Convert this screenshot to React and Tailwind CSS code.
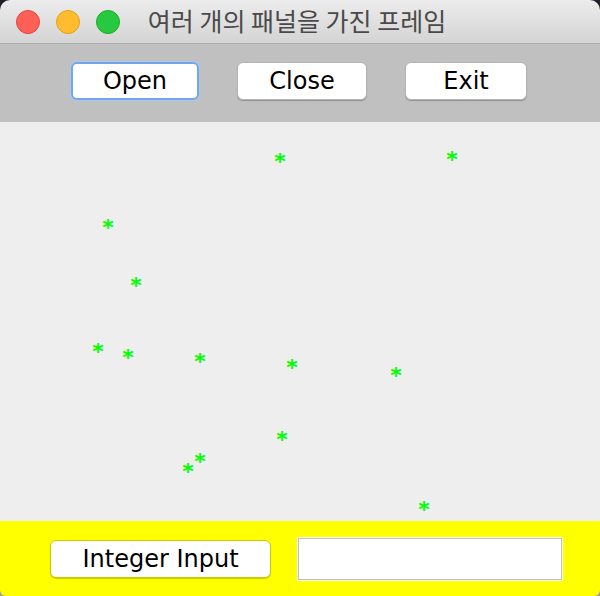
const stars = [
  [280, 158], [452, 156], [108, 224], [136, 282],
  [98, 348], [128, 354], [200, 358], [292, 364], [396, 372],
  [282, 436], [200, 458], [188, 468], [424, 506],
]

function Light({ color, ring }) {
  return <div className={`w-[24px] h-[24px] rounded-full border ${color} ${ring}`} />
}

function MacButton({ children, width, focused }) {
  return (
    <button
      className={`h-[38px] ${width} bg-white rounded-[6px] text-[24px] leading-none text-black flex items-center justify-center ${
        focused
          ? 'border-2 border-[#74a7ea] shadow-[0_0_0_1px_#a9c8f0]'
          : 'border border-[#b4b4b4] shadow-[0_1px_1px_rgba(0,0,0,0.25)]'
      }`}
      style={{ fontFamily: '"DejaVu Sans", sans-serif' }}
    >
      {children}
    </button>
  )
}

export default function App() {
  return (
    <div className="w-[600px] h-[596px] bg-linear-to-b from-[#20202c] to-[#a0a0a0]">
      <div className="w-[600px] h-[596px] flex flex-col rounded-t-[10px] rounded-b-[6px] overflow-hidden">
        {/* title bar */}
        <div className="h-[44px] shrink-0 relative flex items-center bg-linear-to-b from-[#ececec] to-[#d4d4d4] border-b border-[#acacac]">
          <div className="flex items-center gap-[16px] pl-[16px]">
            <Light color="bg-[#fe5f57]" ring="border-[#e2463f]" />
            <Light color="bg-[#febc2e]" ring="border-[#e1a116]" />
            <Light color="bg-[#28c840]" ring="border-[#1aab29]" />
          </div>
          <div
            className="absolute inset-0 flex items-center justify-center text-[25px] text-[#4a4a4a] pb-[1px] pr-[6px]"
            style={{ fontFamily: '"Noto Sans CJK KR", "Noto Sans", sans-serif' }}
          >
            여러 개의 패널을 가진 프레임
          </div>
        </div>

        {/* button panel */}
        <div className="h-[78px] shrink-0 bg-[#c0c0c0] flex justify-center items-start pt-[18px] gap-[38px] pr-[2px]">
          <MacButton width="w-[128px]" focused>Open</MacButton>
          <MacButton width="w-[130px]">Close</MacButton>
          <MacButton width="w-[122px]">Exit</MacButton>
        </div>

        {/* drawing panel */}
        <div className="flex-1 bg-[#eeeeee] relative">
          {stars.map(([x, y], i) => (
            <span
              key={i}
              className="absolute w-[20px] h-[20px] flex items-center justify-center text-[22px] leading-none font-bold text-[#00ff00]"
              style={{ left: x - 10, top: y - 122 - 6, fontFamily: '"DejaVu Sans", sans-serif' }}
            >
              *
            </span>
          ))}
        </div>

        {/* input panel */}
        <div className="h-[75px] shrink-0 bg-[#ffff00] flex items-center pl-[50px] gap-[26px]">
          <button
            className="w-[221px] h-[38px] bg-white rounded-[6px] border border-[#c8c800] shadow-[0_1px_1px_rgba(0,0,0,0.2)] text-[24px] leading-none text-black flex items-center justify-center"
            style={{ fontFamily: '"DejaVu Sans", sans-serif' }}
          >
            Integer Input
          </button>
          <div className="w-[266px] h-[44px] border border-white">
            <input className="w-full h-full bg-white border border-[#c0c0c0] outline-none" />
          </div>
        </div>
      </div>
    </div>
  )
}
